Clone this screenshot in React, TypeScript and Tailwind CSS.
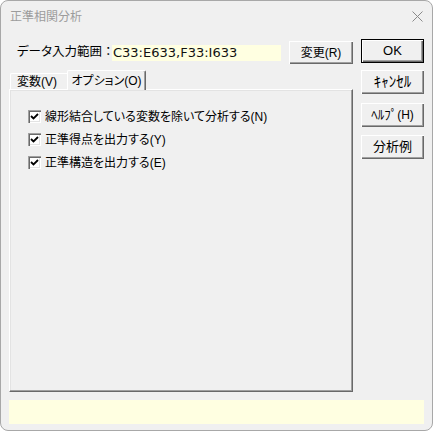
import React from "react";

const jp = "font-['Liberation_Sans','Noto_Sans_CJK_JP',sans-serif] [font-feature-settings:'palt']";
const jpPlain = "font-['Liberation_Sans','Noto_Sans_CJK_JP',sans-serif]";

function Btn({ children, def }: { children: React.ReactNode; def?: boolean }) {
  return (
    <div
      className={`h-[24px] w-[63px] flex items-center justify-center bg-[#f0f0f0] text-[13px] text-black ${jpPlain} ${
        def
          ? "border border-black shadow-[inset_1px_1px_0_#ffffff,inset_-1px_-1px_0_#696969,inset_-2px_-2px_0_#a0a0a0]"
          : "shadow-[inset_1px_1px_0_#ffffff,inset_-1px_-1px_0_#696969,inset_-2px_-2px_0_#a0a0a0]"
      }`}
    >
      {children}
    </div>
  );
}

function Check({ label }: { label: string }) {
  return (
    <div className="flex items-center h-[13px]">
      <div className="w-[13px] h-[13px] bg-white shadow-[inset_1px_1px_0_#a0a0a0,inset_2px_2px_0_#696969,inset_-1px_-1px_0_#ffffff,inset_-2px_-2px_0_#e3e3e3] flex items-center justify-center">
        <svg width="9" height="9" viewBox="0 0 9 9">
          <path d="M1 4 L3.5 6.5 L8 2" stroke="#000" strokeWidth="1.8" fill="none" />
        </svg>
      </div>
      <span className={`ml-[4px] text-[12px] text-black leading-none ${jp}`}>{label}</span>
    </div>
  );
}

export default function App() {
  return (
    <div className="w-[433px] h-[431px] bg-white">
      <div className="w-[433px] h-[431px] bg-[#f0f0f0] border border-[#a8a8a8] rounded-[8px] flex flex-col overflow-hidden">
        <div className="h-[31px] flex items-center justify-between pl-[9px] pr-[9px]">
          <span className={`text-[12px] text-[#9c9c9c] ${jp}`}>正準相関分析</span>
          <svg width="11" height="11" viewBox="0 0 11 11">
            <path d="M0.5 0.5 L10.5 10.5 M10.5 0.5 L0.5 10.5" stroke="#8a8a8a" strokeWidth="1" />
          </svg>
        </div>
        <div className="flex px-[8px] pt-[7px]">
          <div className="w-[344px] flex flex-col">
            <div className="mt-[2px] h-[23px] flex items-center">
              <span className="pl-[8px] w-[103px] text-[12.5px] text-black whitespace-nowrap">
                <span className={jp}>データ入力範囲</span>
                <span className={jpPlain}>：</span>
              </span>
              <div className="w-[169px] h-[16px] bg-[#ffffe1] flex items-center pl-[1px] text-[13px] text-[#111] font-['DejaVu_Sans',sans-serif]">
                C33:E633,F33:I633
              </div>
              <div className="ml-[8px] h-[23px] w-[64px] flex items-center justify-center bg-[#f0f0f0] shadow-[inset_1px_1px_0_#ffffff,inset_-1px_-1px_0_#696969,inset_-2px_-2px_0_#a0a0a0]">
                <span className={`text-[12px] text-black ${jp}`}>変更(R)</span>
              </div>
            </div>
            <div className="mt-[7px] h-[18px] flex items-end pl-[1px]">
              <div className={`h-[16px] w-[58px] border-t border-l border-white rounded-tl-[2px] flex items-center pl-[6px] text-[12px] text-black ${jp}`}>
                変数(V)
              </div>
              <div className={`relative z-10 -mb-[1px] -ml-[1px] h-[20px] w-[79px] bg-[#f0f0f0] border-t border-l border-white border-r border-r-[#696969] rounded-t-[2px] shadow-[inset_-1px_0_0_#a0a0a0] flex items-start pt-[1px] justify-center text-[12px] text-black ${jp}`}>
                オプション(O)
              </div>
            </div>
            <div className="h-[303px] border-t border-l border-white border-r border-b border-r-[#696969] border-b-[#696969] shadow-[inset_-1px_-1px_0_#a0a0a0,inset_1px_1px_0_#e3e3e3] flex flex-col gap-[10px] pl-[18px] pt-[20px]">
              <Check label="線形結合している変数を除いて分析する(N)" />
              <Check label="正準得点を出力する(Y)" />
              <Check label="正準構造を出力する(E)" />
            </div>
          </div>
          <div className="ml-[8px] w-[63px] flex flex-col">
            <Btn def>OK</Btn>
            <div className="mt-[7px]">
              <Btn>
                <span className="text-[15px]">ｷｬﾝｾﾙ</span>
              </Btn>
            </div>
            <div className="mt-[9px]">
              <Btn>
                <span className="text-[13px]">ﾍﾙﾌﾟ</span>
                <span className="text-[12px]">(H)</span>
              </Btn>
            </div>
            <div className="mt-[8px]">
              <Btn>分析例</Btn>
            </div>
          </div>
        </div>
        <div className="mt-[8px] mx-[8px] h-[24px] bg-[#ffffe1]" />
      </div>
    </div>
  );
}
